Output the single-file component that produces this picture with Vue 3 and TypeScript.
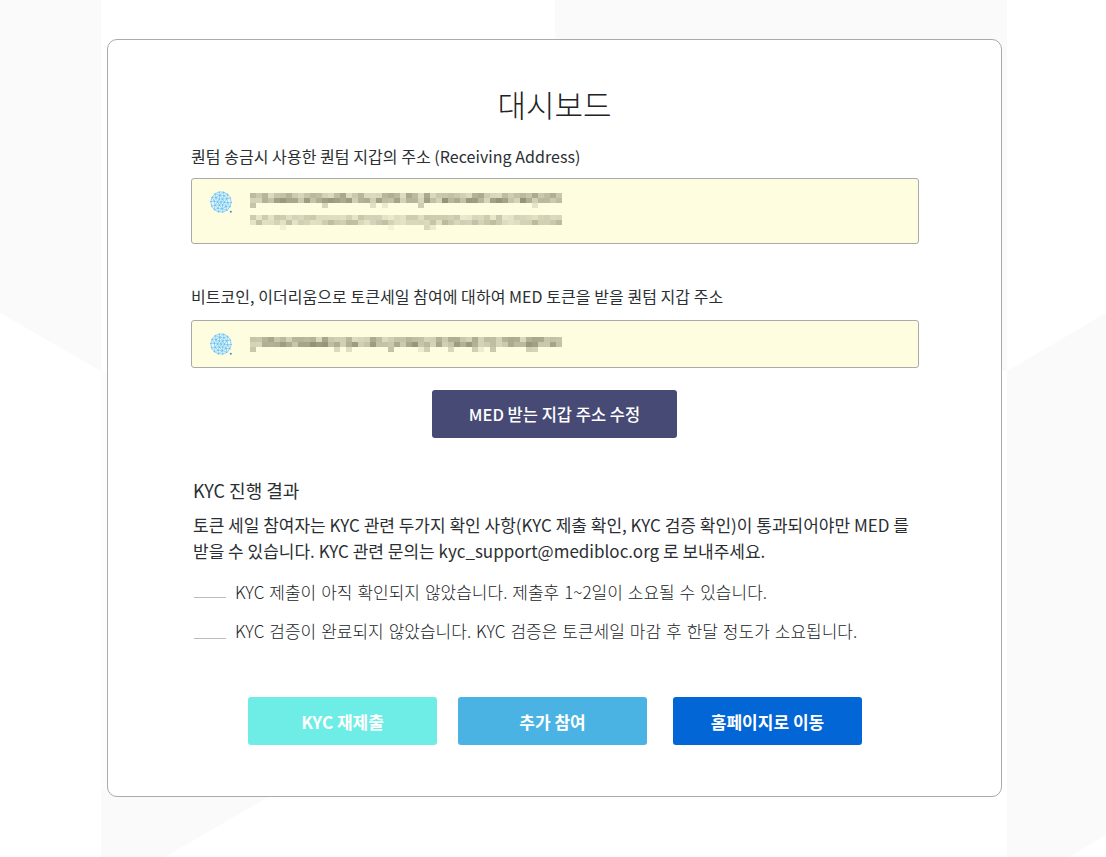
<script setup lang="ts">
// Geodesic mesh for the wallet globe icon: rings of vertices joined into triangles.
type Pt = [number, number]
const cx = 11
const cy = 11
const rings: Pt[][] = [[[cx, cy]]]
;[
  { r: 3.4, n: 6, o: 0 },
  { r: 6.8, n: 10, o: 0.2 },
  { r: 10.2, n: 14, o: 0.1 },
].forEach(({ r, n, o }) => {
  const ring: Pt[] = []
  for (let i = 0; i < n; i++) {
    const a = ((i + o) / n) * Math.PI * 2
    ring.push([+(cx + r * Math.cos(a)).toFixed(2), +(cy + r * Math.sin(a)).toFixed(2)])
  }
  rings.push(ring)
})
const dist = (a: Pt, b: Pt) => Math.hypot(a[0] - b[0], a[1] - b[1])
const flat: Pt[] = rings.flat()
let meshPath = ''
flat.forEach((a, i) => {
  flat.slice(i + 1).forEach((b) => {
    if (dist(a, b) < 5.1) meshPath += `M${a[0]} ${a[1]}L${b[0]} ${b[1]}`
  })
})
const dots = flat

// Mosaic standing in for the censored wallet addresses.
function mosaic(seed: number, base: number): { x: number; y: number; o: number }[] {
  let s = seed
  const rnd = () => {
    s = (s * 16807) % 2147483647
    return s / 2147483647
  }
  const cells: { x: number; y: number; o: number }[] = []
  for (let c = 0; c < 52; c++) {
    cells.push({ x: c * 6, y: 5, o: +(base * (0.35 + rnd() * 0.65)).toFixed(2) })
    cells.push({ x: c * 6, y: 0, o: +(base * (0.3 + rnd() * 0.5)).toFixed(2) })
    if (rnd() > 0.85) cells.push({ x: c * 6, y: 10, o: +(base * (0.15 + rnd() * 0.4)).toFixed(2) })
  }
  return cells
}
const addressRows = [mosaic(7341, 0.8), mosaic(1299, 0.5), mosaic(5021, 0.8)]

const buttons = [
  { label: 'KYC 재제출', tone: 'mint' },
  { label: '추가 참여', tone: 'sky' },
  { label: '홈페이지로 이동', tone: 'blue' },
]
const statuses = [
  'KYC 제출이 아직 확인되지 않았습니다. 제출후 1~2일이 소요될 수 있습니다.',
  'KYC 검증이 완료되지 않았습니다. KYC 검증은 토큰세일 마감 후 한달 정도가 소요됩니다.',
]
</script>

<template>
  <div class="page">
    <svg class="bg" width="1106" height="857" viewBox="0 0 1106 857" aria-hidden="true">
      <polygon points="0,0 101,0 101,371 0,313" fill="#fafafa" />
      <polygon points="555,0 1007,0 1007,371 555,371" fill="#fafafa" />
      <polygon points="1007,371 1106,313 1106,835 1069,857 1007,857" fill="#fafafa" />
      <polygon points="101,371 108,371 108,797 101,797" fill="#fdfdfd" />
      <polygon points="101,790 280,790 165,857 101,857" fill="#fafafa" />
    </svg>
    <main class="card">
      <h1 class="title">대시보드</h1>
      <p class="label first">퀀텀 송금시 사용한 퀀텀 지갑의 주소 (Receiving Address)</p>
      <div class="field tall">
        <svg class="globe" width="24" height="24" viewBox="0 0 24 24" aria-hidden="true">
          <circle cx="11" cy="11" r="10.6" fill="#e2f4fa" />
          <path :d="meshPath" fill="none" stroke="#62c0ec" stroke-width=".6" />
          <circle v-for="(p, i) in dots" :key="i" :cx="p[0]" :cy="p[1]" r=".5" fill="#4fb2e6" />
          <circle cx="20.8" cy="20.8" r="1" fill="#2a93cf" />
        </svg>
        <svg class="mosaic" width="312" height="15" viewBox="0 0 312 15" aria-hidden="true">
          <rect v-for="(c, i) in addressRows[0]" :key="i" :x="c.x" :y="c.y" width="6" height="5" fill="#77775c" :opacity="c.o" />
        </svg>
        <svg class="mosaic next" width="312" height="15" viewBox="0 0 312 15" aria-hidden="true">
          <rect v-for="(c, i) in addressRows[1]" :key="i" :x="c.x" :y="c.y" width="6" height="5" fill="#77775c" :opacity="c.o" />
        </svg>
      </div>
      <p class="label second">비트코인, 이더리움으로 토큰세일 참여에 대하여 MED 토큰을 받을 퀀텀 지갑 주소</p>
      <div class="field field-short">
        <svg class="globe" width="24" height="24" viewBox="0 0 24 24" aria-hidden="true">
          <circle cx="11" cy="11" r="10.6" fill="#e2f4fa" />
          <path :d="meshPath" fill="none" stroke="#62c0ec" stroke-width=".6" />
          <circle v-for="(p, i) in dots" :key="i" :cx="p[0]" :cy="p[1]" r=".5" fill="#4fb2e6" />
          <circle cx="20.8" cy="20.8" r="1" fill="#2a93cf" />
        </svg>
        <svg class="mosaic single" width="312" height="15" viewBox="0 0 312 15" aria-hidden="true">
          <rect v-for="(c, i) in addressRows[2]" :key="i" :x="c.x" :y="c.y" width="6" height="5" fill="#77775c" :opacity="c.o" />
        </svg>
      </div>
      <button class="edit" type="button">MED 받는 지갑 주소 수정</button>
      <section class="kyc">
        <h2 class="kyc-title">KYC 진행 결과</h2>
        <p class="kyc-text">토큰 세일 참여자는 KYC 관련 두가지 확인 사항(KYC 제출 확인, KYC 검증 확인)이 통과되어야만 MED 를<br />받을 수 있습니다. KYC 관련 문의는 kyc_support@medibloc.org 로 보내주세요.</p>
        <ul class="status">
          <li v-for="s in statuses" :key="s"><i class="dash"></i><span>{{ s }}</span></li>
        </ul>
      </section>
      <div class="actions">
        <button v-for="b in buttons" :key="b.label" type="button" class="action" :class="b.tone">{{ b.label }}</button>
      </div>
    </main>
  </div>
</template>

<style>
html, body { margin: 0; background: #fff; }
</style>

<style scoped>
.page {
  position: relative;
  width: 1106px;
  height: 857px;
  overflow: hidden;
  padding-top: 39px;
  box-sizing: border-box;
  font-family: "Noto Sans CJK KR", "Noto Sans", sans-serif;
  color: #2b2f33;
}
.bg { position: absolute; left: 0; top: 0; }
.card {
  position: relative;
  box-sizing: border-box;
  width: 895px;
  height: 758px;
  margin-left: 107px;
  padding: 40px 83px 0;
  background: #fff;
  border: 1px solid #aaa;
  border-radius: 10px;
}
.title {
  margin: 0;
  font-size: 31px;
  font-weight: 300;
  line-height: 48px;
  text-align: center;
  color: #222;
}
.label { margin: 0; font-size: 16px; line-height: 24px; letter-spacing: 0.05px; }
.first { margin-top: 16px; }
.second { margin-top: 40px; }
.field {
  position: relative;
  display: flex;
  align-items: flex-start;
  box-sizing: border-box;
  width: 728px;
  height: 48px;
  margin-top: 10px;
  padding: 12px 18px 0;
  background: #fffde0;
  border: 1px solid #aaa;
  border-radius: 3px;
}
.field-short { margin-top: 12px; }
.tall { height: 66px; }
.globe { flex: none; }
.mosaic { flex: none; margin: 2px 0 0 16px; filter: blur(0.7px); }
.mosaic.next { position: absolute; left: 58px; top: 36px; margin: 0; }
.mosaic.single { margin-top: 4px; }
.edit {
  display: block;
  width: 245px;
  height: 48px;
  margin: 22px auto 0;
  background: #474a75;
  color: #fff;
  border: 0;
  border-radius: 3px;
  font: 500 16.5px "Noto Sans CJK KR", sans-serif;
}
.kyc { margin-top: 39px; padding-left: 2px; }
.kyc-title { margin: 0; font-size: 18px; font-weight: 400; line-height: 26px; }
.kyc-text { margin: 9px 0 0; font-size: 17px; line-height: 26px; white-space: nowrap; }
.status { list-style: none; margin: 16px 0 0; padding: 0; display: flex; flex-direction: column; gap: 15px; }
.status li {
  display: flex;
  align-items: center;
  gap: 9px;
  height: 24px;
  font-size: 17px;
  font-weight: 300;
  line-height: 24px;
  word-spacing: 1.2px;
  color: #212427;
  white-space: nowrap;
}
.dash { display: block; width: 32px; height: 1px; background: #bbb; margin: 10px 0 0 1px; flex: none; }
.status li:last-child .dash { margin-top: 14px; }
.actions { display: flex; gap: 21px; margin: 54px 0 0 57px; }
.action {
  width: 189px;
  height: 48px;
  border: 0;
  border-radius: 3px;
  color: #fff;
  font: 700 17px "Noto Sans CJK KR", sans-serif;
}
.action:last-child { margin-left: 5px; }
.mint { background: #6eece6; }
.sky { background: #4ab3e4; }
.blue { background: #0366d6; }
</style>
